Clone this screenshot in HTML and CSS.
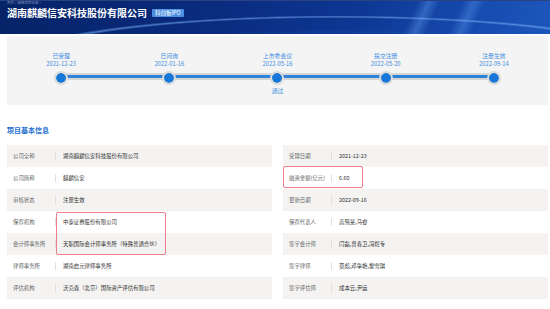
FILE: index.html
```html
<!DOCTYPE html>
<html lang="zh-CN">
<head>
    <meta charset="UTF-8">
    <meta name="viewport" content="width=device-width, initial-scale=1.0">
    <title>湖南麒麟信安科技股份有限公司 - 科创板IPO</title>
    <link rel="stylesheet" href="styles.css">
</head>
<body>
    <header class="banner">
        <div class="crumb">首页 &gt; 审核项目动态 &gt;</div>
        <div class="title-row">
            <h1>湖南麒麟信安科技股份有限公司</h1>
            <span class="tag">科创板IPO</span>
        </div>
    </header>

    <main class="content">
        <section class="progress">
            <div class="steps">
                <div class="track"></div>
                <div class="step">
                    <span class="step-name">已受理</span>
                    <span class="step-date">2021-12-23</span>
                    <span class="node"></span>
                </div>
                <div class="step">
                    <span class="step-name">已问询</span>
                    <span class="step-date">2022-01-16</span>
                    <span class="node"></span>
                </div>
                <div class="step">
                    <span class="step-name">上市委会议</span>
                    <span class="step-date">2022-05-16</span>
                    <span class="node"></span>
                    <span class="step-note">通过</span>
                </div>
                <div class="step">
                    <span class="step-name">提交注册</span>
                    <span class="step-date">2022-05-20</span>
                    <span class="node"></span>
                </div>
                <div class="step">
                    <span class="step-name">注册生效</span>
                    <span class="step-date">2022-09-14</span>
                    <span class="node"></span>
                </div>
            </div>
        </section>

        <h2 class="section-title">项目基本信息</h2>

        <div class="info">
            <div class="info-table">
                <div class="row"><span class="label">公司全称</span><span class="value">湖南麒麟信安科技股份有限公司</span></div>
                <div class="row"><span class="label">公司简称</span><span class="value">麒麟信安</span></div>
                <div class="row"><span class="label">审核状态</span><span class="value">注册生效</span></div>
                <div class="row">
                    <span class="label">保荐机构</span><span class="value">中泰证券股份有限公司</span>
                    <span class="mark mark-agency"></span>
                </div>
                <div class="row"><span class="label">会计师事务所</span><span class="value">天职国际会计师事务所（特殊普通合伙）</span></div>
                <div class="row"><span class="label">律师事务所</span><span class="value">湖南启元律师事务所</span></div>
                <div class="row"><span class="label">评估机构</span><span class="value">沃克森（北京）国际资产评估有限公司</span></div>
            </div>
            <div class="info-table">
                <div class="row"><span class="label">受理日期</span><span class="value">2021-12-23</span></div>
                <div class="row">
                    <span class="label">融资金额(亿元)</span><span class="value">6.60</span>
                    <span class="mark mark-amount"></span>
                </div>
                <div class="row"><span class="label">更新日期</span><span class="value">2022-09-16</span></div>
                <div class="row"><span class="label">保荐代表人</span><span class="value">高鹭旻,马睿</span></div>
                <div class="row"><span class="label">签字会计师</span><span class="value">闫磊,曾春卫,冯煜专</span></div>
                <div class="row"><span class="label">签字律师</span><span class="value">莫彪,邓争艳,黎雪琪</span></div>
                <div class="row"><span class="label">签字评估师</span><span class="value">成本云,尹运</span></div>
            </div>
        </div>
    </main>
</body>
</html>
```

FILE: styles.css
```css
body {
    margin: 0;
    font-family: "Noto Sans CJK SC", "Noto Sans", sans-serif;
    background-color: #fff;
    color: #333;
}
.banner {
    height: 34px;
    overflow: hidden;
    background:
        radial-gradient(ellipse 330px 46px at 335px 60px, transparent 93%, rgba(130, 185, 255, 0.55) 96%, transparent 99%),
        radial-gradient(ellipse 300px 40px at 340px 58px, rgba(50, 120, 225, 0.75), transparent 75%),
        linear-gradient(115deg, transparent 74%, rgba(110, 170, 250, 0.35) 76%, transparent 78%, transparent 82%, rgba(110, 170, 250, 0.3) 84%, transparent 86%),
        linear-gradient(100deg, #062367 0%, #0a2c80 40%, #0d3793 65%, #164aae 85%, #1d56bb 100%);
    border-top: 1px solid #2b4280;
    box-sizing: border-box;
}
.crumb {
    padding-left: 7px;
    font-size: 3.5px;
    line-height: 4px;
    color: #8495c0;
}
.title-row {
    display: flex;
    align-items: center;
    gap: 5px;
    padding: 1px 0 0 7px;
}
.title-row h1 {
    margin: 0;
    font-size: 10px;
    line-height: 13px;
    font-weight: bold;
    color: #fff;
}
.tag {
    padding: 0 3px;
    font-size: 5.5px;
    line-height: 8px;
    color: #fff;
    background-color: #4b8fe2;
    border-radius: 1px;
}
.content {
    padding: 2px 2px 0 7px;
}
.progress {
    height: 69px;
    padding-top: 16px;
    box-sizing: border-box;
    background-color: #f4f4f4;
}
.steps {
    position: relative;
    display: grid;
    grid-template-columns: repeat(5, 1fr);
}
.track {
    position: absolute;
    left: 10%;
    right: 10%;
    top: 21px;
    height: 7px;
    background-color: #d6d6d6;
}
.track::after {
    content: "";
    position: absolute;
    left: 0;
    right: 0;
    top: 2px;
    height: 3px;
    background-color: #2d83da;
}
.step {
    display: flex;
    flex-direction: column;
    align-items: center;
    font-size: 5.8px;
    line-height: 8px;
    color: #3d8ee0;
}
.node {
    position: relative;
    width: 10px;
    height: 10px;
    margin-top: 3px;
    border: 2.5px solid #dadada;
    border-radius: 50%;
    background-color: #1677d8;
    background-clip: padding-box;
}
.step-note {
    margin-top: 2px;
}
.section-title {
    margin: 20px 0 10px;
    font-size: 7px;
    line-height: 10px;
    font-weight: bold;
    color: #1f6fd1;
}
.info {
    display: grid;
    grid-template-columns: 1fr 1fr;
    gap: 11px;
}
.row {
    position: relative;
    display: flex;
    align-items: center;
    height: 22px;
    font-size: 5.4px;
}
.row:nth-child(odd) {
    background-color: #f4f3f2;
}
.label {
    width: 42px;
    padding-left: 6px;
    color: #666;
    white-space: nowrap;
}
.value {
    padding-left: 7px;
    line-height: 8px;
    border-left: 1px solid #e0e0e0;
    color: #333;
    white-space: nowrap;
}
.mark {
    position: absolute;
    z-index: 1;
    border: 1.5px solid #ef7d8a;
    border-radius: 2px;
}
.mark-amount {
    left: 0;
    top: -1px;
    width: 78px;
    height: 20px;
}
.mark-agency {
    left: 49px;
    top: 1px;
    width: 108px;
    height: 41px;
}
```
